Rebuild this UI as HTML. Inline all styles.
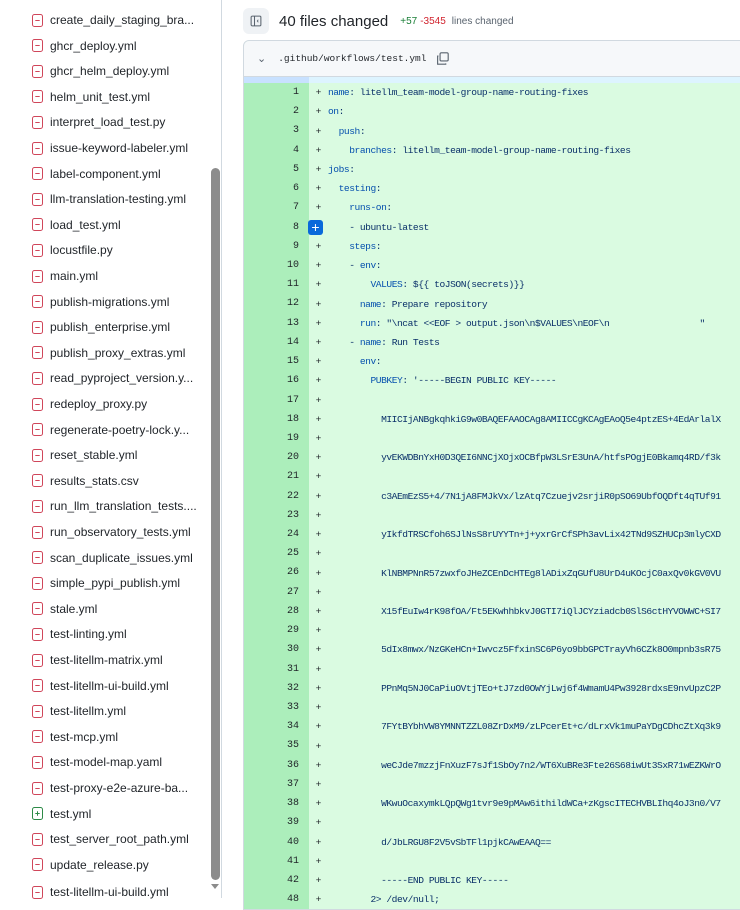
<!DOCTYPE html>
<html><head><meta charset="utf-8"><style>
*{margin:0;padding:0;box-sizing:border-box}
body{width:740px;height:898px;overflow:hidden;background:#fff;font-family:"Liberation Sans",sans-serif;position:relative}
.side{position:absolute;left:0;top:0;width:222px;height:898px;border-right:1px solid #d1d9e0}
.it{position:absolute;left:32px;height:20px;display:flex;align-items:center;font-size:12px;color:#1f2328;white-space:nowrap}
.it svg{margin-right:7px}
.thumb{position:absolute;left:211px;top:168px;width:9px;height:712px;background:#8c8c8c;border-radius:5px}
.hdr{position:absolute;left:243px;top:8px;height:26px;display:flex;align-items:center}
.box{position:absolute;left:243px;top:40px;width:510px;height:870px;border:1px solid #d1d9e0;border-radius:6px 0 0 0;overflow:hidden;background:#dafbe1}
.fh{height:36px;background:#f6f8fa;border-bottom:1px solid #d1d9e0;display:flex;align-items:center;font-family:"Liberation Mono",monospace;font-size:9.5px;color:#1f2328}
.hunk{height:6px;display:flex}
.row{height:19.22px;display:flex;align-items:center;font-family:"Liberation Mono",monospace;font-size:9.6px;letter-spacing:-0.45px;white-space:pre;color:#1f2328}
.ln{width:65px;background:#aceebb;height:100%;text-align:right;padding-right:10px;line-height:19.22px;flex:none;font-size:10px;letter-spacing:0}
.pl{width:19px;text-align:center;flex:none;position:relative;letter-spacing:0}
.k{color:#0550ae}.s{color:#0a3069}
</style></head><body>
<div class="side">
<div class="thumb"></div>
<div style="position:absolute;left:211px;top:884px;width:0;height:0;border-left:4px solid transparent;border-right:4px solid transparent;border-top:5px solid #8c8c8c"></div>
</div>
<div id="list"></div>
<div class="hdr">
<div style="width:26px;height:26px;background:#eff2f5;border-radius:6px;display:flex;align-items:center;justify-content:center"><svg width="12" height="12" viewBox="0 0 16 16"><rect x="1.5" y="1.5" width="13" height="13" rx="1.5" fill="none" stroke="#59636e" stroke-width="1.4"/><line x1="6" y1="2" x2="6" y2="14" stroke="#59636e" stroke-width="1.4"/><path d="M11 5.5L9 8l2 2.5z" fill="#59636e"/></svg></div>
<span style="font-size:15px;color:#1f2328;margin-left:10px">40 files changed</span>
<span style="font-size:10px;color:#1a7f37;margin-left:12px">+57</span>
<span style="font-size:10px;color:#d1242f;margin-left:3px">-3545</span>
<span style="font-size:10px;color:#59636e;margin-left:6px">lines changed</span>
</div>
<div class="box">
<div class="fh"><span style="margin-left:13px;color:#59636e;font-family:'Liberation Sans';font-size:11px">&#8964;</span><span style="margin-left:12px">.github/workflows/test.yml</span>
<svg style="margin-left:10px" width="13" height="13" viewBox="0 0 16 16"><rect x="5" y="1" width="10" height="10" rx="1.5" fill="none" stroke="#59636e" stroke-width="1.4"/><path d="M3 5H2v10h10v-1" fill="none" stroke="#59636e" stroke-width="1.4"/></svg></div>
<div class="hunk"><div style="width:65px;background:#c8e1ff"></div><div style="flex:1;background:#ddf4ff"></div></div>
<div id="code"></div>
</div>
<script>
var files=["create_daily_staging_bra...","ghcr_deploy.yml","ghcr_helm_deploy.yml","helm_unit_test.yml","interpret_load_test.py","issue-keyword-labeler.yml","label-component.yml","llm-translation-testing.yml","load_test.yml","locustfile.py","main.yml","publish-migrations.yml","publish_enterprise.yml","publish_proxy_extras.yml","read_pyproject_version.y...","redeploy_proxy.py","regenerate-poetry-lock.y...","reset_stable.yml","results_stats.csv","run_llm_translation_tests....","run_observatory_tests.yml","scan_duplicate_issues.yml","simple_pypi_publish.yml","stale.yml","test-linting.yml","test-litellm-matrix.yml","test-litellm-ui-build.yml","test-litellm.yml","test-mcp.yml","test-model-map.yaml","test-proxy-e2e-azure-ba...","test.yml","test_server_root_path.yml","update_release.py"];
var h="";
function ic(c,add){return '<svg width="11" height="13" viewBox="0 0 11 13"><rect x="0.5" y="0.5" width="10" height="12" rx="2" fill="none" stroke="'+c+'" stroke-width="1"/><line x1="3.3" y1="6.5" x2="7.7" y2="6.5" stroke="'+c+'" stroke-width="1"/>'+(add?'<line x1="5.5" y1="4.3" x2="5.5" y2="8.7" stroke="'+c+'" stroke-width="1"/>':'')+'</svg>';}
files.forEach(function(f,i){var add=f=="test.yml";var c=add?"#2d8a47":"#d0465a";
h+='<div class="it" style="top:'+(10+i*25.6)+'px">'+ic(c,add)+f+'</div>';});
h+='<div class="it" style="top:'+(10+34*25.6+2)+'px">'+ic("#d0465a",false)+'test-litellm-ui-build.yml</div>';
document.getElementById("list").innerHTML=h;
var K=function(s){return '<span class="k">'+s+'</span>'};
var lines=[
K("name")+": litellm_team-model-group-name-routing-fixes",
K("on")+":",
"  "+K("push")+":",
"    "+K("branches")+": litellm_team-model-group-name-routing-fixes",
K("jobs")+":",
"  "+K("testing")+":",
"    "+K("runs-on")+":",
"    - ubuntu-latest",
"    "+K("steps")+":",
"    - "+K("env")+":",
"        "+K("VALUES")+": ${{ toJSON(secrets)}}",
"      "+K("name")+": Prepare repository",
"      "+K("run")+': "\\ncat &lt;&lt;EOF &gt; output.json\\n$VALUES\\nEOF\\n                 "',
"    - "+K("name")+": Run Tests",
"      "+K("env")+":",
"        "+K("PUBKEY")+": '-----BEGIN PUBLIC KEY-----",
"","          MIICIjANBgkqhkiG9w0BAQEFAAOCAg8AMIICCgKCAgEAoQ5e4ptzES+4EdArlalX",
"","          yvEKWDBnYxH0D3QEI6NNCjXOjxOCBfpW3LSrE3UnA/htfsPOgjE0Bkamq4RD/f3k",
"","          c3AEmEzS5+4/7N1jA8FMJkVx/lzAtq7Czuejv2srjiR0pSO69UbfOQDft4qTUf91",
"","          yIkfdTRSCfoh6SJlNsS8rUYYTn+j+yxrGrCfSPh3avLix42TNd9SZHUCp3mlyCXD",
"","          KlNBMPNnR57zwxfoJHeZCEnDcHTEg8lADixZqGUfU8UrD4uKOcjC0axQv0kGV0VU",
"","          X15fEuIw4rK98fOA/Ft5EKwhhbkvJ0GTI7iQlJCYziadcb0SlS6ctHYVOWWC+SI7",
"","          5dIx8mwx/NzGKeHCn+Iwvcz5FfxinSC6P6yo9bbGPCTrayVh6CZk8O0mpnb3sR75",
"","          PPnMq5NJ0CaPiuOVtjTEo+tJ7zd0OWYjLwj6f4WmamU4Pw3928rdxsE9nvUpzC2P",
"","          7FYtBYbhVW8YMNNTZZL08ZrDxM9/zLPcerEt+c/dLrxVk1muPaYDgCDhcZtXq3k9",
"","          weCJde7mzzjFnXuzF7sJf1SbOy7n2/WT6XuBRe3Fte26S68iwUt3SxR71wEZKWrO",
"","          WKwuOcaxymkLQpQWg1tvr9e9pMAw6ithildWCa+zKgscITECHVBLIhq4oJ3n0/V7",
"","          d/JbLRGU8F2V5vSbTFl1pjkCAwEAAQ==",
"","          -----END PUBLIC KEY-----",
"        2&gt; /dev/null;"];
var c="";
lines.forEach(function(l,i){var n=i<42?i+1:48;
var p=n==8?'<span style="position:absolute;left:-1px;top:-7px;width:15px;height:15px;background:#0969da;border-radius:3px;color:#fff;font-family:Liberation Sans;font-size:14px;line-height:14px;text-align:center">+</span>':'+';
c+='<div class="row"><div class="ln">'+n+'</div><div class="pl">'+p+'</div><div class="s">'+(l||"")+'</div></div>';});
document.getElementById("code").innerHTML=c;
</script>
</body></html>
